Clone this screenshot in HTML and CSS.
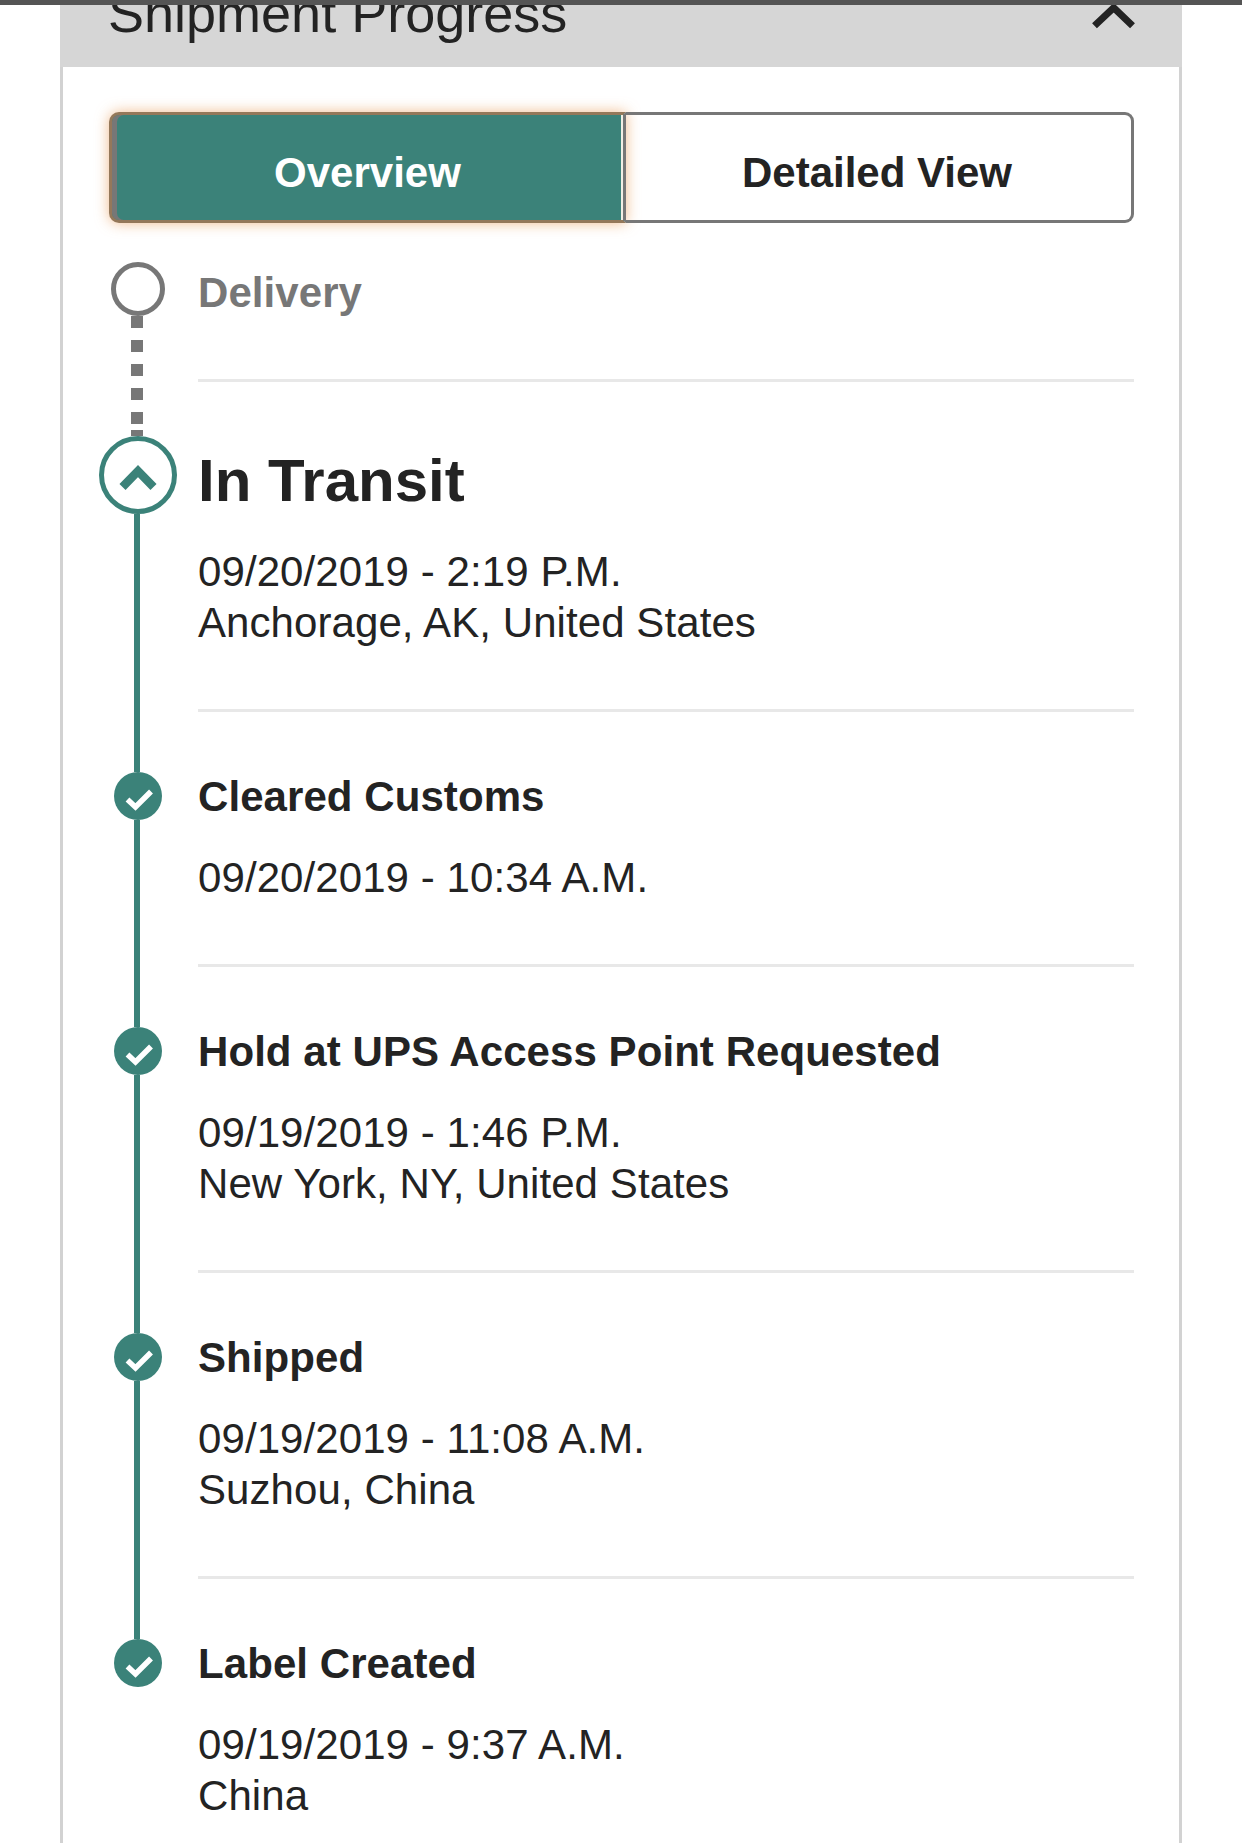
FILE: index.html
```html
<!DOCTYPE html>
<html lang="en">
<head>
<meta charset="utf-8">
<title>Shipment Progress</title>
<link rel="stylesheet" href="styles.css">
</head>
<body>
<div class="topbar"></div>
<section class="card">
  <header class="card-head">
    <h2 class="card-title">Shipment Progress</h2>
    <svg class="head-chevron" viewBox="0 0 44 30" aria-hidden="true"><path d="M3.5 26.8 L22.7 8.7 L41.5 26.8"/></svg>
  </header>
  <div class="card-body">
    <div class="tabs">
      <div class="tab tab-active">Overview</div>
      <div class="tab">Detailed View</div>
    </div>

    <ol class="steps">
      <li class="step step-first">
        <div class="rail">
          <div class="seg-none"></div>
          <svg class="ico-pending" viewBox="0 0 54 54" aria-hidden="true"><circle cx="27" cy="27" r="24.5"/></svg>
          <div class="seg-dash-a"></div>
        </div>
        <div class="step-body body-first">
          <div class="step-title muted">Delivery</div>
        </div>
      </li>

      <li class="step">
        <div class="rail">
          <div class="seg-dash-b"></div>
          <svg class="ico-current" viewBox="0 0 78 78" aria-hidden="true"><circle class="ring" cx="39" cy="39" r="36.5"/><path class="chev" d="M23.5 51 L39 35 L54.5 51"/></svg>
          <div class="seg-line"></div>
        </div>
        <div class="step-body body-current">
          <div class="step-title title-big">In Transit</div>
          <p class="step-text">09/20/2019 - 2:19 P.M.<br>Anchorage, AK, United States</p>
        </div>
      </li>

      <li class="step">
        <div class="rail">
          <div class="seg-top"></div>
          <svg class="ico-done" viewBox="0 0 48 48" aria-hidden="true"><circle cx="24" cy="24" r="24"/><path d="M13.5 27.5 L21.5 35 L37 19.5"/></svg>
          <div class="seg-line"></div>
        </div>
        <div class="step-body">
          <div class="step-title">Cleared Customs</div>
          <p class="step-text">09/20/2019 - 10:34 A.M.</p>
        </div>
      </li>

      <li class="step">
        <div class="rail">
          <div class="seg-top"></div>
          <svg class="ico-done" viewBox="0 0 48 48" aria-hidden="true"><circle cx="24" cy="24" r="24"/><path d="M13.5 27.5 L21.5 35 L37 19.5"/></svg>
          <div class="seg-line"></div>
        </div>
        <div class="step-body">
          <div class="step-title">Hold at UPS Access Point Requested</div>
          <p class="step-text">09/19/2019 - 1:46 P.M.<br>New York, NY, United States</p>
        </div>
      </li>

      <li class="step">
        <div class="rail">
          <div class="seg-top"></div>
          <svg class="ico-done" viewBox="0 0 48 48" aria-hidden="true"><circle cx="24" cy="24" r="24"/><path d="M13.5 27.5 L21.5 35 L37 19.5"/></svg>
          <div class="seg-line"></div>
        </div>
        <div class="step-body">
          <div class="step-title">Shipped</div>
          <p class="step-text">09/19/2019 - 11:08 A.M.<br>Suzhou, China</p>
        </div>
      </li>

      <li class="step">
        <div class="rail">
          <div class="seg-top"></div>
          <svg class="ico-done" viewBox="0 0 48 48" aria-hidden="true"><circle cx="24" cy="24" r="24"/><path d="M13.5 27.5 L21.5 35 L37 19.5"/></svg>
        </div>
        <div class="step-body body-last">
          <div class="step-title">Label Created</div>
          <p class="step-text">09/19/2019 - 9:37 A.M.<br>China</p>
        </div>
      </li>
    </ol>
  </div>
</section>
</body>
</html>
```
FILE: styles.css
```css
* { box-sizing: border-box; }

html, body {
  margin: 0;
  height: 1843px;
  overflow: hidden;
  background: #fff;
}

body {
  display: flex;
  flex-direction: column;
  font-family: "Liberation Sans", Arial, sans-serif;
  color: #232323;
}

.topbar {
  height: 5px;
  flex: none;
  background: #555;
}

.card {
  flex: 1;
  margin: 0 60px;
  min-height: 0;
  overflow: hidden;
}

.card-head {
  height: 62px;
  display: flex;
  justify-content: space-between;
  align-items: flex-end;
  padding: 0 47px 0 48px;
  background: #d6d6d6;
  overflow: hidden;
}

.card-title {
  margin: 0 0 23px;
  font-size: 54px;
  font-weight: 400;
  line-height: 62px;
  white-space: nowrap;
}

.head-chevron {
  width: 44px;
  height: 30px;
  margin-bottom: 38px;
  flex: none;
  fill: none;
  stroke: #232323;
  stroke-width: 7;
  stroke-linejoin: miter;
}

.card-body {
  height: 1776px;
  border-left: 3px solid #d2d2d2;
  border-right: 3px solid #d2d2d2;
  padding: 45px 45px 0 46px;
}

.tabs {
  display: flex;
  height: 111px;
}

.tab {
  display: flex;
  align-items: center;
  justify-content: center;
  width: 508px;
  padding: 10px 3px 0 0;
  border: 3px solid #777;
  border-left: 0;
  border-radius: 0 9px 9px 0;
  font-size: 42px;
  font-weight: 700;
}

.tab-active {
  width: 517px;
  padding-right: 0;
  border: 3px solid #94785a;
  border-right-color: #777;
  border-radius: 10px 0 0 10px;
  background: #3b8279;
  color: #fff;
  box-shadow:
    inset 5px 0 0 #777,
    inset -2px 0 0 #f1eee4,
    0 0 14px rgba(232, 150, 80, .65);
}

.steps {
  list-style: none;
  margin: 0;
  padding: 0;
}

.step {
  display: flex;
}

.rail {
  width: 58px;
  margin-right: 31px;
  flex: none;
  display: flex;
  flex-direction: column;
  align-items: center;
}

.seg-none { height: 39px; flex: none; }

.seg-top {
  width: 6px;
  height: 60px;
  margin-right: 2px;
  flex: none;
  background: #3b8279;
}

.seg-line {
  width: 6px;
  margin-right: 2px;
  flex: 1;
  background: #3b8279;
}

.seg-dash-a {
  width: 12px;
  margin-right: 2px;
  flex: 1;
  background: repeating-linear-gradient(#777 0 12px, transparent 12px 24px);
}

.seg-dash-b {
  width: 12px;
  height: 54px;
  margin-right: 2px;
  flex: none;
  background: linear-gradient(transparent 0 6px, #777 6px 18px, transparent 18px 30px, #777 30px 42px, transparent 42px 48px, #777 48px);
}

.ico-pending {
  width: 54px;
  height: 54px;
  flex: none;
  fill: #fff;
  stroke: #777;
  stroke-width: 5;
}

.ico-current {
  width: 78px;
  height: 78px;
  flex: none;
  margin: 0 -10px;
  fill: none;
}

.ico-current .ring {
  fill: #fff;
  stroke: #3b8279;
  stroke-width: 5;
}

.ico-current .chev {
  stroke: #3b8279;
  stroke-width: 8.5;
}

.ico-done {
  width: 48px;
  height: 48px;
  flex: none;
}

.ico-done circle { fill: #3b8279; }

.ico-done path {
  fill: none;
  stroke: #fff;
  stroke-width: 5.5;
}

.step-body {
  flex: 1;
  padding: 59px 0 61px;
  border-bottom: 3px solid #e8e8e8;
}

.body-first { padding: 44px 0 61px; }

.body-current { padding-top: 60px; }

.body-last { border-bottom: 0; }

.step-title {
  font-size: 42px;
  font-weight: 700;
  line-height: 51px;
  letter-spacing: .07px;
}

.muted { color: #777; }

.title-big {
  font-size: 60px;
  line-height: 77px;
  letter-spacing: 0;
}

.step-text {
  margin: 30px 0 0;
  font-size: 42px;
  line-height: 51px;
  letter-spacing: .08px;
}

.title-big + .step-text { margin-top: 27px; }
```
